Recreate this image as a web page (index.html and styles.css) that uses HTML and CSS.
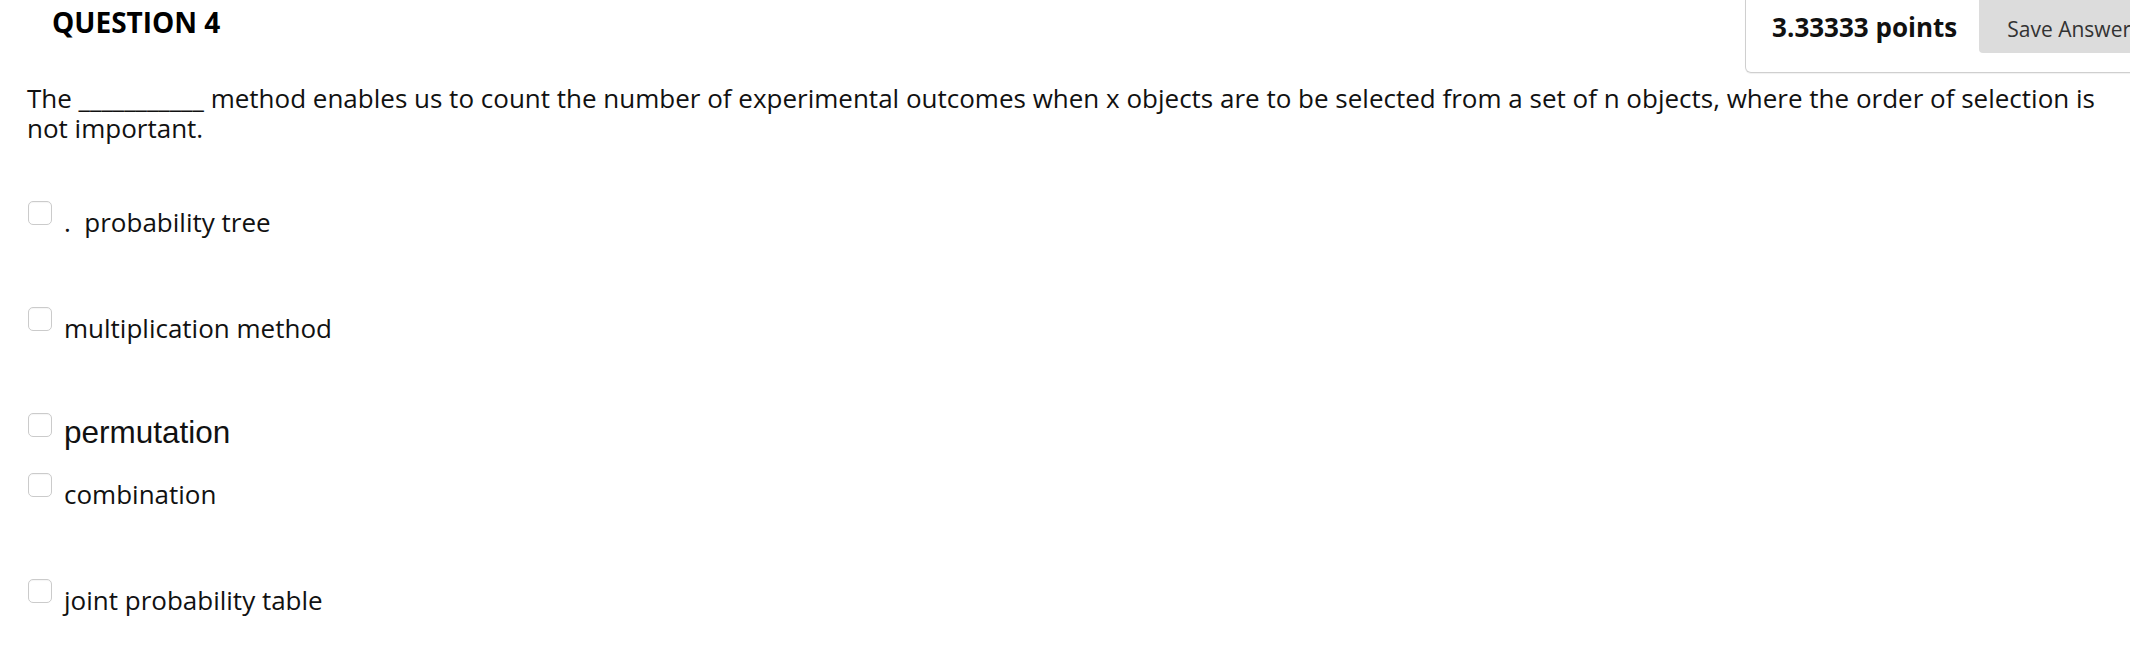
FILE: index.html
```html
<!DOCTYPE html>
<html lang="en">
<head>
<meta charset="utf-8">
<title>Question 4</title>
<link rel="stylesheet" href="styles.css">
</head>
<body>
<div class="page">
  <div class="head">
    <h2 class="title">QUESTION 4</h2>
    <div class="panel">
      <span class="points">3.33333 points</span>
      <button class="save" type="button">Save Answer</button>
    </div>
  </div>
  <p class="question">The ___________ method enables us to count the number of experimental outcomes when x objects are to be selected from a set of n objects, where the order of selection is not important.</p>
  <ul class="options">
    <li class="opt opt-1"><span class="box"></span><span class="lbl lbl-dot">.&nbsp; probability tree</span></li>
    <li class="opt opt-2"><span class="box"></span><span class="lbl">multiplication method</span></li>
    <li class="opt opt-3"><span class="box"></span><span class="lbl lbl-arial">permutation</span></li>
    <li class="opt opt-4"><span class="box"></span><span class="lbl">combination</span></li>
    <li class="opt opt-5"><span class="box"></span><span class="lbl lbl-low">joint probability table</span></li>
  </ul>
</div>
</body>
</html>
```

FILE: styles.css
```css
html, body {
  margin: 0;
  padding: 0;
  background: #ffffff;
  overflow: hidden;
}

body {
  font-family: "Open Sans", "Liberation Sans", sans-serif;
  color: #111111;
}

.page {
  padding-left: 27px;
}

.head {
  display: flex;
  justify-content: space-between;
  align-items: flex-start;
  margin-right: -40px;
}

.title {
  margin: 4px 0 0 25px;
  font-size: 28px;
  line-height: 36px;
  font-weight: 700;
  color: #000;
}

.panel {
  display: flex;
  align-items: baseline;
  gap: 22px;
  padding: 0 10px 19px 26px;
  border: 1px solid #cfcfcf;
  border-top: none;
  border-radius: 0 0 6px 6px;
  box-shadow: 0 1px 1px rgba(0, 0, 0, 0.06);
}

.points {
  font-size: 26px;
  font-weight: 700;
  line-height: 36px;
  color: #111;
}

.save {
  font-family: "Open Sans", "Liberation Sans", sans-serif;
  font-size: 21px;
  line-height: 30px;
  color: #333;
  background: #dcdcdc;
  border: none;
  border-radius: 0 0 4px 4px;
  padding: 14px 28px 9px 28px;
  white-space: nowrap;
}

.question {
  margin: 10px 0 0 0;
  font-size: 26px;
  line-height: 30px;
}

.options {
  list-style: none;
  margin: 58px 0 0 1px;
  padding: 0;
}

.opt {
  display: flex;
  align-items: flex-start;
  gap: 12px;
}

.box {
  flex: none;
  width: 22px;
  height: 22px;
  border: 1px solid #cbcbcb;
  border-radius: 5px;
  background: #fff;
  box-shadow: inset 0 1px 1px rgba(0, 0, 0, 0.04);
}

.lbl {
  font-size: 26px;
  line-height: 36px;
  padding-top: 3px;
}

.lbl-dot {
  padding-top: 3px;
}

.lbl-low {
  padding-top: 3px;
}

.lbl-arial {
  font-family: "Liberation Sans", Arial, sans-serif;
  font-size: 31.5px;
  padding-top: 1px;
}

.opt-1 { margin-bottom: 67px; }
.opt-2 { margin-bottom: 67px; }
.opt-3 { margin-bottom: 23px; }
.opt-4 { margin-bottom: 67px; }
```
